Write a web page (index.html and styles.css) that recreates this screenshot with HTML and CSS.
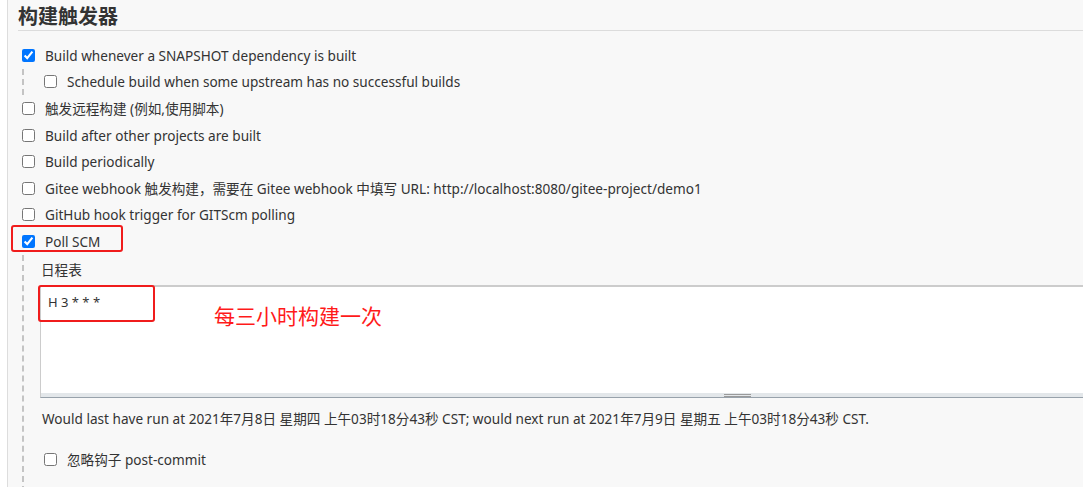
FILE: index.html
```html
<!DOCTYPE html>
<html lang="zh-CN">
<head>
  <meta charset="UTF-8" />
  <meta name="viewport" content="width=device-width, initial-scale=1.0"/>
  <title>构建触发器</title>
  <link rel="stylesheet" href="styles.css">
</head>
<body>

  <div class="page">
    <h2 class="section-title">构建触发器</h2>

    <div class="option">
      <input type="checkbox" checked>
      <label>Build whenever a SNAPSHOT dependency is built</label>
    </div>
    <div class="nested">
      <div class="option">
        <input type="checkbox">
        <label>Schedule build when some upstream has no successful builds</label>
      </div>
    </div>

    <div class="option">
      <input type="checkbox">
      <label>触发远程构建 (例如,使用脚本)</label>
    </div>
    <div class="option">
      <input type="checkbox">
      <label>Build after other projects are built</label>
    </div>
    <div class="option">
      <input type="checkbox">
      <label>Build periodically</label>
    </div>
    <div class="option">
      <input type="checkbox">
      <label>Gitee webhook 触发构建，需要在 Gitee webhook 中填写 URL: http://localhost:8080/gitee-project/demo1</label>
    </div>
    <div class="option">
      <input type="checkbox">
      <label>GitHub hook trigger for GITScm polling</label>
    </div>
    <div class="option">
      <input type="checkbox" checked>
      <label>Poll SCM</label>
      <!-- annotation box -->
      <span class="mark mark-poll"></span>
    </div>

    <div class="nested nested-long">
      <div class="field-label">日程表</div>
      <div class="schedule">
        <textarea class="schedule-input" spellcheck="false">H 3 * * *</textarea>
        <div class="grip"><span></span></div>
        <span class="mark mark-cron"></span>
        <span class="note">每三小时构建一次</span>
      </div>
      <div class="hint">Would last have run at 2021年7月8日 星期四 上午03时18分43秒 CST; would next run at 2021年7月9日 星期五 上午03时18分43秒 CST.</div>
      <div class="option option-last">
        <input type="checkbox">
        <label>忽略钩子 post-commit</label>
      </div>
    </div>
  </div>

</body>
</html>
```

FILE: styles.css
```css
body {
  margin: 0;
  background: #fff;
  font-family: "Noto Sans", "Noto Sans CJK SC", sans-serif;
  font-size: 13.6px;
  color: #333;
}

.page {
  position: relative;
  margin-left: 7px;
  padding-left: 10px;
  height: 487px;
  overflow: hidden;
  background: #f8f8f8;
  border-left: 1px solid #ddd;
}

.section-title {
  margin: 0;
  padding-top: 2px;
  height: 28px;
  font-size: 20px;
  font-weight: bold;
  color: #333;
  border-bottom: 1px solid #dcdcdc;
  font-family: "Noto Sans CJK SC", sans-serif;
  line-height: 28px;
}

.section-title + .option {
  margin-top: 11px;
}

.option {
  position: relative;
  display: flex;
  align-items: center;
  height: 26.6px;
}

.option input {
  margin: 0 10px 0 4px;
  width: 13px;
  height: 13px;
}

.nested {
  margin-left: 4px;
  padding-left: 16px;
  border-left: 2px dashed #c4c4c4;
}

.nested .option input {
  margin-left: 4px;
}

.nested-long {
  padding-top: 4px;
  padding-bottom: 30px;
}

.field-label {
  line-height: 22px;
  margin-left: 1px;
}

.schedule {
  position: relative;
  margin-top: 4px;
  width: calc(100% + 10px);
}

.schedule-input {
  display: block;
  box-sizing: border-box;
  width: 100%;
  height: 108px;
  margin: 0;
  padding: 6px 7px;
  resize: none;
  border: 1px solid #ccc;
  border-top: 2px solid #ccc;
  border-bottom: none;
  border-radius: 2px 0 0 0;
  background: #fff;
  font-family: "Noto Sans", sans-serif;
  font-size: 13px;
  color: #333;
  outline: none;
}

.grip {
  height: 4px;
  background: #e3e7ea;
  border-left: 1px solid #ccc;
  border-bottom: 1px solid #98a2ab;
  position: relative;
}

.grip span {
  position: absolute;
  left: 683px;
  top: 1px;
  width: 27px;
  height: 1px;
  border-top: 1px solid #9a9a9a;
  border-bottom: 1px solid #9a9a9a;
}

.hint {
  margin-top: 12px;
  margin-left: 2px;
  line-height: 18px;
}

.option-last {
  margin-top: 18px;
}

.mark {
  position: absolute;
  border: 2px solid #f01c1c;
  border-radius: 3px;
}

.mark-poll {
  left: -7px;
  top: -3px;
  width: 108px;
  height: 23px;
}

.mark-cron {
  left: -2px;
  top: 0;
  width: 113px;
  height: 33px;
}

.note {
  position: absolute;
  left: 174px;
  top: 15px;
  font-family: "Noto Sans CJK SC", sans-serif;
  font-size: 21px;
  color: #ff1a1a;
}
```
